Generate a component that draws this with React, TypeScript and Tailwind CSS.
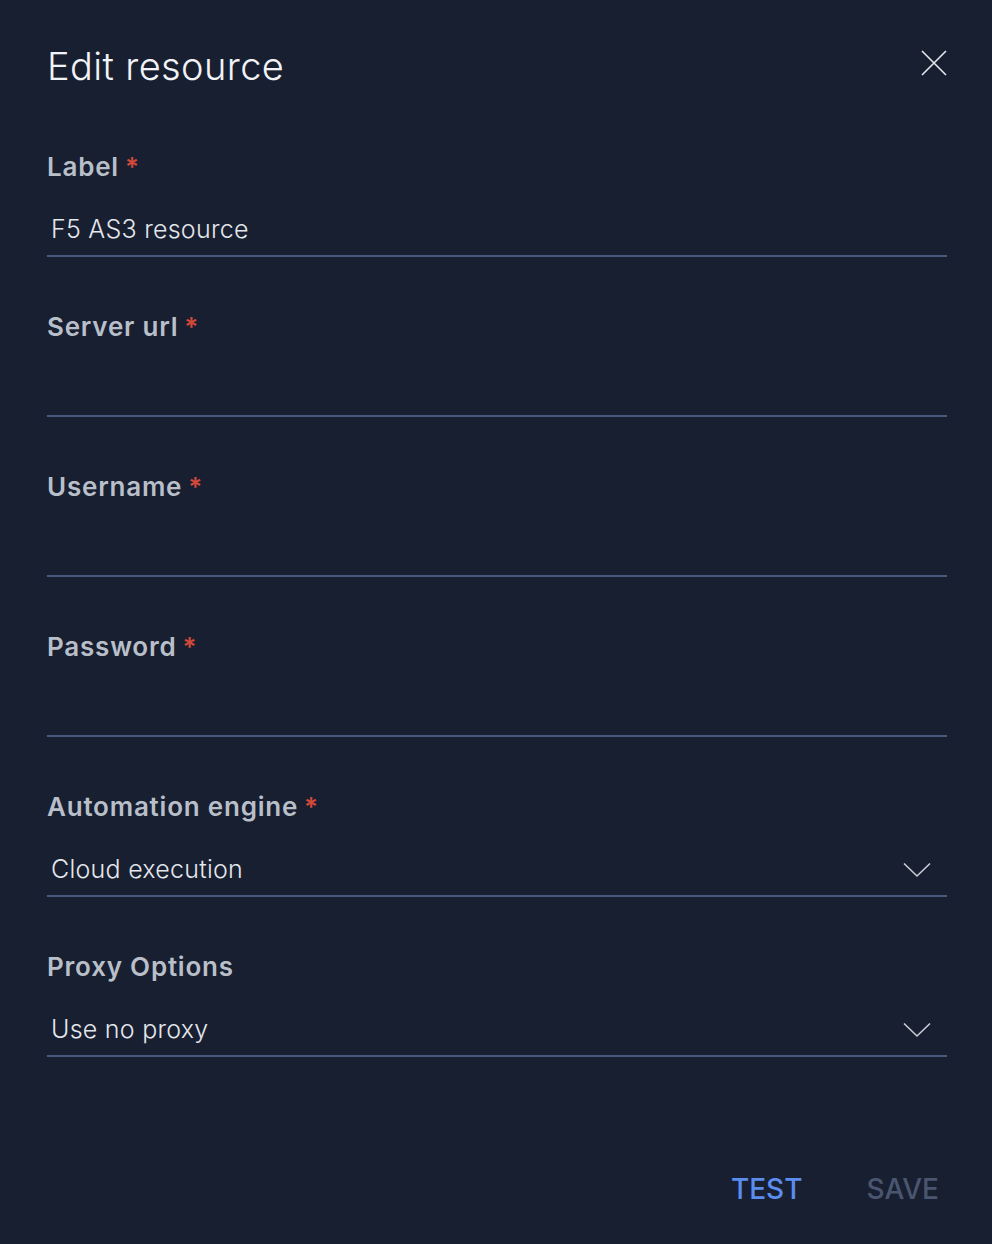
const FONT = "font-['Inter','Noto_Sans',sans-serif]"

type Field = {
  label: string
  required?: boolean
  value?: string
  select?: boolean
}

const FIELDS: Field[] = [
  { label: 'Label', required: true, value: 'F5 AS3 resource' },
  { label: 'Server url', required: true },
  { label: 'Username', required: true },
  { label: 'Password', required: true },
  { label: 'Automation engine', required: true, value: 'Cloud execution', select: true },
  { label: 'Proxy Options', value: 'Use no proxy', select: true }
]

function Chevron() {
  return (
    <svg width="28" height="16" viewBox="0 0 28 16" fill="none" className="text-[#c9cdd4]">
      <path d="M1 1.5 L14 14 L27 1.5" stroke="currentColor" strokeWidth="1.6" />
    </svg>
  )
}

function FormField({ field }: { field: Field }) {
  return (
    <div className="mb-[54px]">
      <div className="h-8 text-[26px] leading-8 font-semibold tracking-[0.03em] text-[#b9bfc9]">
        {field.label}
        {field.required && <span className="ml-1.5 text-[#d2493a]">*</span>}
      </div>
      <div className="mt-[22px] flex h-[52px] items-center justify-between border-b-2 border-[#47587a] pl-1 pr-4">
        <span className="text-[25px] font-light tracking-[0.01em] text-[#e4e7ec]">{field.value}</span>
        {field.select && <Chevron />}
      </div>
    </div>
  )
}

export default function App() {
  return (
    <div className={`${FONT} min-h-[1244px] w-full bg-[#181f31] pt-10 pr-[45px] pl-[47px]`}>
      <div className="flex h-[52px] items-center justify-between">
        <h1 className="text-[38px] leading-[52px] font-light tracking-[0.01em] text-[#f1f3f6]">Edit resource</h1>
        <svg width="26" height="26" viewBox="0 0 26 26" fill="none" className="-mt-[6px] text-[#e6e8ec]">
          <path d="M1 1 L25 25 M25 1 L1 25" stroke="currentColor" strokeWidth="1.6" />
        </svg>
      </div>
      <div className="mt-[59px]">
        {FIELDS.map(f => (
          <FormField key={f.label} field={f} />
        ))}
      </div>
      <div className="mt-[108px] flex justify-end gap-[40px]">
        <button className="h-12 px-3 text-[28px] font-medium text-[#5b8def]">TEST</button>
        <button className="h-12 pr-2 pl-3 text-[28px] font-medium text-[#4a5670]">SAVE</button>
      </div>
    </div>
  )
}
